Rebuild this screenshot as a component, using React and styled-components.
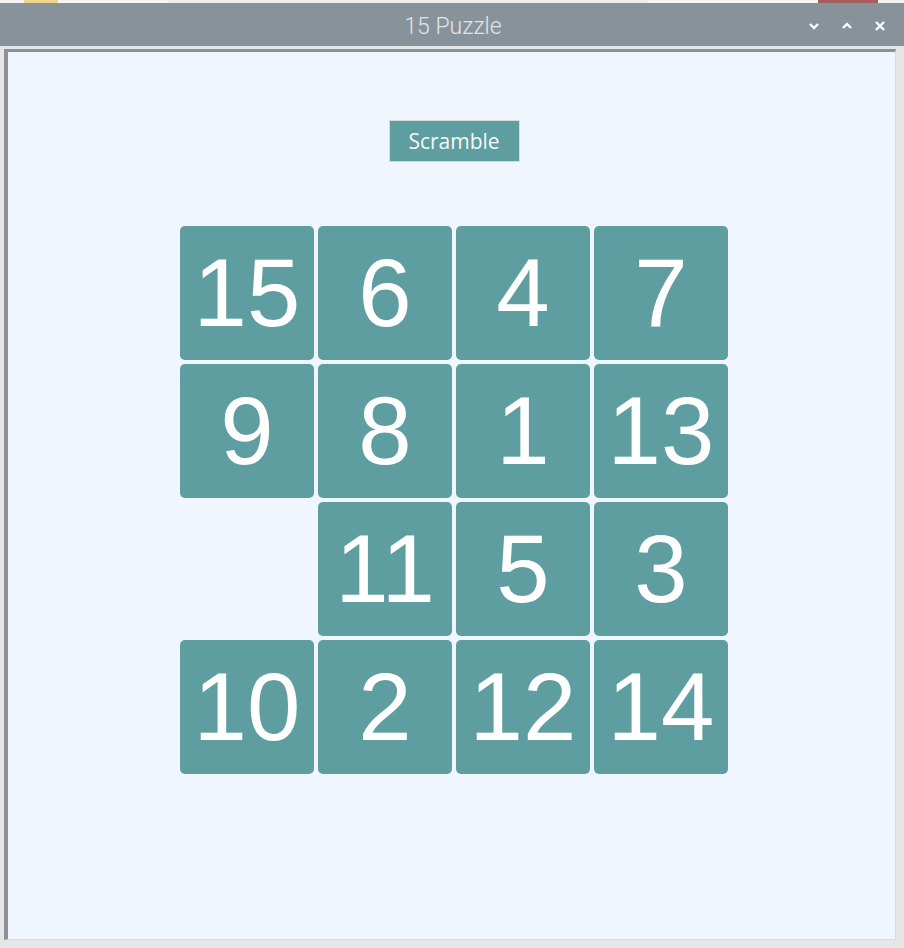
import styled, { createGlobalStyle } from 'styled-components'

const GlobalStyle = createGlobalStyle`
  html, body {
    margin: 0;
    padding: 0;
    background: #e6e8ea;
  }
`

const tiles = [15, 6, 4, 7, 9, 8, 1, 13, null, 11, 5, 3, 10, 2, 12, 14]

function App() {
  return (
    <>
      <GlobalStyle />
      <Screen>
        <DesktopStrip>
          <StripBit $w={24} $c='#f4f4f4' />
          <StripBit $w={34} $c='#f1d58c' />
          <StripBit $w={110} $c='#f7f7f7' />
          <StripBit $w={480} $c='#eeeeee' />
          <StripBit $w={170} $c='#f7f7f7' />
          <StripBit $w={60} $c='#a65d5d' />
        </DesktopStrip>
        <Window>
          <TitleBar>
            <Title>15 Puzzle</Title>
            <Controls>
              <svg width='12' height='8' viewBox='0 0 12 8'>
                <path d='M2 2 L6 6 L10 2' stroke='#fff' strokeWidth='2.4' fill='none' />
              </svg>
              <svg width='12' height='8' viewBox='0 0 12 8'>
                <path d='M2 6 L6 2 L10 6' stroke='#fff' strokeWidth='2.4' fill='none' />
              </svg>
              <svg width='12' height='12' viewBox='0 0 12 12'>
                <path d='M2 2 L10 10 M10 2 L2 10' stroke='#fff' strokeWidth='2.4' fill='none' />
              </svg>
            </Controls>
          </TitleBar>
          <Frame>
            <Content>
              <ScrambleButton>Scramble</ScrambleButton>
              <Board>
                {tiles.map((n, i) =>
                  n ? <Tile key={i}>{n}</Tile> : <Blank key={i} />
                )}
              </Board>
            </Content>
          </Frame>
        </Window>
      </Screen>
    </>
  )
}

const Screen = styled.div`
  width: 904px;
  height: 948px;
  display: flex;
  flex-direction: column;
  overflow: hidden;
`

const DesktopStrip = styled.div`
  height: 3px;
  display: flex;
  background: #f2f2f2;
`

const StripBit = styled.div`
  width: ${(p) => p.$w}px;
  background: ${(p) => p.$c};
`

const Window = styled.div`
  flex: 1;
  display: flex;
  flex-direction: column;
  background: #e4e6e8;
`

const TitleBar = styled.div`
  height: 43px;
  box-sizing: border-box;
  padding-top: 3px;
  background: #87929a;
  position: relative;
  display: flex;
  align-items: center;
  justify-content: center;
`

const Title = styled.div`
  font-family: Roboto, 'Liberation Sans', sans-serif;
  font-weight: 300;
  font-size: 23px;
  color: #e2e5e8;
  margin-left: 2px;
`

const Controls = styled.div`
  position: absolute;
  right: 18px;
  top: 3px;
  bottom: 0;
  display: flex;
  align-items: center;
  gap: 21px;
`

const Frame = styled.div`
  flex: 1;
  padding: 3px 8px 8px 4px;
  display: flex;
`

const Content = styled.div`
  flex: 1;
  background: #eff6ff;
  border-top: 3px solid #8d9094;
  border-left: 4px solid #8d9094;
  border-right: 1px solid #d8dade;
  border-bottom: 1px solid #d8dade;
  display: flex;
  flex-direction: column;
  align-items: center;
  padding: 68px 0 0 5px;
`

const ScrambleButton = styled.button`
  width: 131px;
  height: 42px;
  background: #5f9ea0;
  border: 1px solid #d4dadd;
  color: #f4f8f8;
  font-family: 'Open Sans', 'Noto Sans', sans-serif;
  font-size: 21px;
  padding: 0;
  margin-bottom: 64px;
`

const Board = styled.div`
  display: grid;
  grid-template-columns: repeat(4, 134px);
  grid-auto-rows: 134px;
  gap: 4px;
`

const Tile = styled.div`
  background: #5f9ea0;
  border-radius: 5px;
  color: #ffffff;
  font-family: 'Liberation Sans', Arial, sans-serif;
  font-size: 96px;
  line-height: 1;
  display: flex;
  align-items: center;
  justify-content: center;
  white-space: nowrap;
`

const Blank = styled.div``

export default App
